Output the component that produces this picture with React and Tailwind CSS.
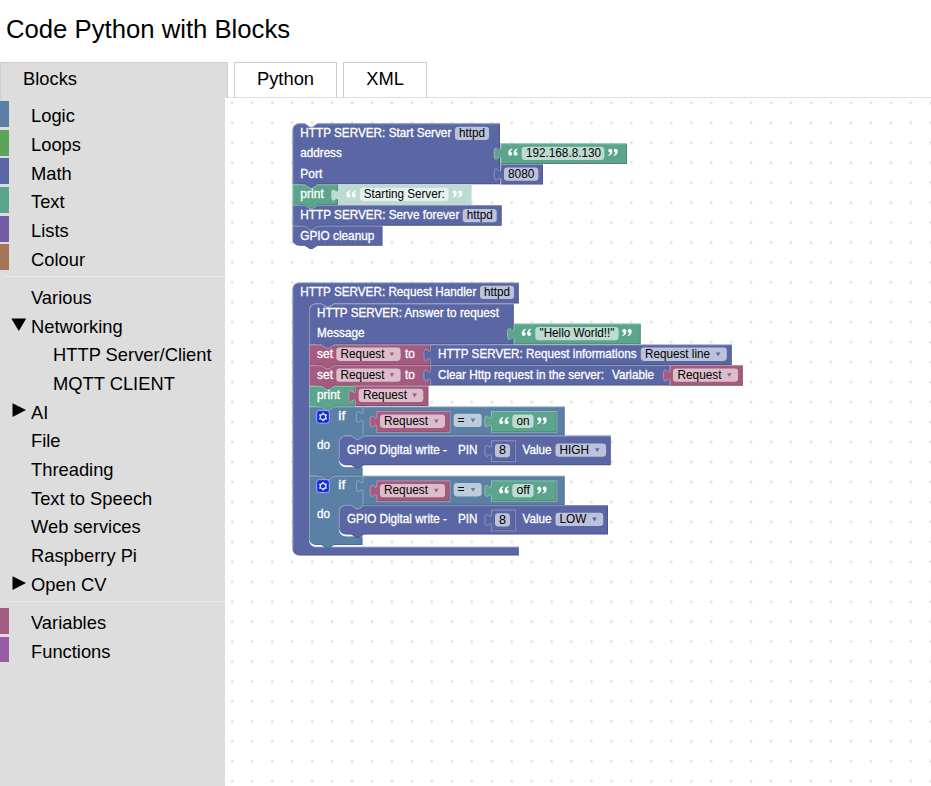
import React from "react";

const MATH = "#5b67a5";
const TEXT = "#5ba58c";
const LOGIC = "#5b80a5";
const VARS = "#a55b80";

/* ---------- toolbox ---------- */

function Row({ label, color = "transparent", icon, nested }) {
  return (
    <div
      className="flex h-[25.83px] mb-[2.87px] items-center border-l-[9px] whitespace-nowrap"
      style={{ borderLeftColor: color }}
    >
      <span className={nested ? "w-[44px] shrink-0" : "w-[22px] shrink-0"}>
        {icon === "down" && (
          <svg className="block ml-[2px] mt-[1px]" width="16" height="14" viewBox="0 0 16 14">
            <path d="M0.3 0.6H15.2L7.8 12.9Z" fill="#000" />
          </svg>
        )}
        {icon === "right" && (
          <svg className="block ml-[3px] mt-[1px]" width="15" height="15" viewBox="0 0 15 15">
            <path d="M0.5 0.2V14.1L14 7.1Z" fill="#000" />
          </svg>
        )}
      </span>
      <span className="relative top-[2.4px]">{label}</span>
    </div>
  );
}

function Separator() {
  return (
    <div className="h-[9.6px] pt-[2.8px]">
      <div className="ml-[3px] h-px bg-[#e8e8e8]" />
    </div>
  );
}

function Toolbox() {
  return (
    <div className="w-[225px] shrink-0 bg-[#ddd] pt-[3px] text-[18.33px] leading-none text-black">
      <Row label="Logic" color={LOGIC} />
      <Row label="Loops" color="#5ba55b" />
      <Row label="Math" color={MATH} />
      <Row label="Text" color={TEXT} />
      <Row label="Lists" color="#745ba5" />
      <Row label="Colour" color="#a5745b" />
      <Separator />
      <Row label="Various" />
      <Row label="Networking" icon="down" />
      <Row label="HTTP Server/Client" nested />
      <Row label="MQTT CLIENT" nested />
      <Row label="AI" icon="right" />
      <Row label="File" />
      <Row label="Threading" />
      <Row label="Text to Speech" />
      <Row label="Web services" />
      <Row label="Raspberry Pi" />
      <Row label="Open CV" icon="right" />
      <Separator />
      <Row label="Variables" color={VARS} />
      <Row label="Functions" color="#995ba5" />
    </div>
  );
}

/* ---------- blocks ---------- */

const NOTCH_R = "l5 3.4h2.5l5 -3.4";
const NOTCH_L = "l-5 3.4h-2.5l-5 -3.4";
const TAB_UP = "c0 -8.3 -6.7 6.7 -6.7 -6.25s6.7 2.1 6.7 -6.25";
const R = 6.7;

function Edges({ light, dark }) {
  return (
    <>
      <path d={dark} fill="none" stroke="#000" strokeOpacity="0.16" />
      <path d={light} fill="none" stroke="#fff" strokeOpacity="0.3" />
    </>
  );
}

function Stmt({ x, y, r, b, c, roundTop, roundBottom }) {
  const top = roundTop ? `M${x} ${y + R}a${R} ${R} 0 0 1 ${R} ${-R}` : `M${x} ${y}`;
  const notch = `H${x + 12.5}${NOTCH_R}`;
  const bottom = roundBottom ? `H${x + R}a${R} ${R} 0 0 1 ${-R} ${-R}` : `H${x}`;
  const start = `M${x + 0.5} ${b - (roundBottom ? R : 0)}`;
  const hi = roundTop
    ? `${start}V${y + R}a${R - 0.5} ${R - 0.5} 0 0 1 ${R - 0.5} ${0.5 - R}`
    : `${start}V${y + 0.5}`;
  return (
    <g>
      <path d={`${top}${notch}H${r}V${b}H${x + 25}${NOTCH_L}${bottom}Z`} fill={c} />
      <Edges
        light={`${hi}H${x + 12.5}${NOTCH_R}H${r}`}
        dark={`M${r - 0.5} ${y + 1}V${b - 0.5}H${x + 25}${NOTCH_L}H${x + R}`}
      />
    </g>
  );
}

function Value({ x, y, r, b, c, flat, inline }) {
  return (
    <g>
      <path d={`M${x} ${y}H${r}V${b}H${x}V${y + 16.7}${TAB_UP}Z`} fill={c} />
      {!flat && (
        <Edges
          light={`M${x + 0.5} ${b}V${y + 16.7}${TAB_UP}V${y + 0.5}H${r}`}
          dark={`M${r - 0.5} ${y + 1}V${b - 0.5}H${x}`}
        />
      )}
      {inline && (
        <path d={`M${x} ${b + 0.3}H${r + 0.3}V${y}`} fill="none" stroke="#fff" strokeOpacity="0.3" />
      )}
    </g>
  );
}

function Label({ x, y, w, children, dark }) {
  return (
    <text
      x={x}
      y={y}
      textLength={w}
      lengthAdjust="spacingAndGlyphs"
      fill={dark ? "#000" : "#fff"}
      stroke={dark ? "none" : "#fff"}
      strokeWidth={dark ? 0 : 0.3}
    >
      {children}
    </text>
  );
}

function Field({ x, y, w, tx, tw, children, arrow }) {
  return (
    <g>
      <rect x={x} y={y} width={w} height="13.3" rx="3.3" fill="#fff" fillOpacity="0.6" />
      <Label x={tx} y={y + 10.3} w={tw} dark>
        {children}
      </Label>
      {arrow && <path d={`M${x + w - 11} ${y + 4.8}h4.6l-2.3 3.9z`} fill={arrow} />}
    </g>
  );
}

function Quote({ x, y, close }) {
  const mark = "M4.4 0.2C2.2 0.7 0.5 2.3 0.5 4.9C0.5 6.5 1.3 7.4 2.5 7.4C3.7 7.4 4.5 6.6 4.5 5.5C4.5 4.5 3.8 3.8 2.9 3.7C2.8 2.5 3.4 1.5 4.7 0.9Z";
  return (
    <g transform={close ? `translate(${x + 10.4} ${y + 7.8}) rotate(180)` : `translate(${x} ${y})`} fill="#fff">
      <path d={mark} />
      <path d={mark} transform="translate(5.4 0)" />
    </g>
  );
}

function Gear({ x, y }) {
  return (
    <g transform={`translate(${x} ${y})`}>
      <rect width="12.6" height="12.8" rx="2.6" fill="#1428e6" stroke="#a9bdd6" strokeWidth="0.9" />
      <circle cx="6.3" cy="6.5" r="2.75" fill="none" stroke="#e4e8ff" strokeWidth="1.3" />
      <path
        d="M6.3 2.2v1.4M6.3 9.4v1.4M2.6 4.35l1.2.7M8.8 7.95l1.2.7M2.6 8.65l1.2-.7M8.8 5.05l1.2-.7"
        stroke="#e4e8ff"
        strokeWidth="1.5"
      />
    </g>
  );
}

function IfBlock({ y, op, w, right, fieldW, optW, option }) {
  const x = 309;
  const ix = 338.9;
  const arm = 362.5;
  const t = y + 29.2;
  const ib = y + 60.5;
  const b = y + 69.3;
  const last = op === "off";
  const foot = last ? `H${x + R}a${R} ${R} 0 0 1 ${-R} ${-R}` : `H${x}`;
  return (
    <g>
      <path
        d={`M${x} ${y}H${x + 12.5}${NOTCH_R}H${arm + 2}V${t}H${ix + 25}${NOTCH_L}H${ix + R}a${R} ${R} 0 0 0 ${-R} ${R}V${ib - R}a${R} ${R} 0 0 0 ${R} ${R}H${arm}V${b}H${x + 25}${NOTCH_L}${foot}Z`}
        fill={LOGIC}
      />
      <Edges
        light={`M${x + 0.5} ${b - (last ? R : 0)}V${y + 0.5}H${x + 12.5}${NOTCH_R}H${arm}M${ix + 2} ${ib - 2}a${R} ${R} 0 0 0 ${R - 2} 2H${arm}`}
        dark={`M${arm - 0.5} ${ib}V${b - 0.5}H${x + 25}${NOTCH_L}H${x + R}`}
      />
      <Gear x={316.7} y={y + 4} />
      <Label x={338.3} y={y + 13.5} w={7}>if</Label>
      <Label x={317} y={y + 42.5} w={13}>do</Label>

      <Value x={362.5} y={y} r={564.7} b={t} c={LOGIC} />
      <path d={`M${ix + 12} ${t - 0.2}H${ix + 25}${NOTCH_L}Z`} fill={LOGIC} />
      <Value x={376.3} y={y + 4.7} r={449.7} b={y + 25.6} c={VARS} inline />
      <Field x={380} y={y + 8.2} w={65} tx={384} tw={44} arrow={VARS}>Request</Field>
      <Field x={453.7} y={y + 7.4} w={28} tx={457.5} tw={7} arrow={LOGIC}>=</Field>
      <Value x={491} y={y + 4.7} r={556.6} b={y + 25.6} c={TEXT} inline />
      <Quote x={498.7} y={y + 10.4} />
      <Field x={512.3} y={y + 8.2} w={21.3} tx={516.5} tw={w}>{op}</Field>
      <Quote x={536.8} y={y + 10.4} close />

      <Stmt x={ix} y={t} r={right} b={t + 29.6} c={MATH} roundTop roundBottom />
      <Label x={347} y={t + 18.4} w={100}>GPIO Digital write -</Label>
      <Label x={458} y={t + 18.4} w={19.5}>PIN</Label>
      <Value x={491} y={t + 4.7} r={515.3} b={t + 25.6} c={MATH} inline />
      <Field x={495} y={t + 8.4} w={15} tx={499} tw={7}>8</Field>
      <Label x={522.5} y={t + 18.4} w={29}>Value</Label>
      <Field x={555.5} y={t + 7.8} w={fieldW} tx={559.5} tw={optW} arrow={MATH}>{option}</Field>
    </g>
  );
}

function StartServerStack() {
  return (
    <g>
      <Stmt x={292.4} y={225.7} r={382.5} b={245.7} c={MATH} roundBottom />
      <Stmt x={292.4} y={205} r={501.7} b={225.7} c={MATH} />
      <Stmt x={292.4} y={184.3} r={338} b={205} c={TEXT} />
      <Stmt x={292.4} y={123.3} r={500} b={184.3} c={MATH} roundTop />

      <Label x={300.3} y={137} w={151}>HTTP SERVER: Start Server</Label>
      <Field x={455} y={126.7} w={34} tx={459} tw={26}>httpd</Field>
      <Label x={300.3} y={157.3} w={41.5}>address</Label>
      <Label x={300.3} y={178} w={22}>Port</Label>

      <Value x={500.4} y={143.3} r={627} b={164} c={TEXT} />
      <Quote x={507.7} y={148.3} />
      <Field x={521.7} y={146.8} w={82.6} tx={526} tw={75}>192.168.8.130</Field>
      <Quote x={607.8} y={148.3} close />
      <Value x={500.4} y={164} r={543} b={184.6} c={MATH} />
      <Field x={504} y={167.5} w={34.3} tx={508} tw={26.5}>8080</Field>

      <Label x={300.3} y={198.2} w={23.5}>print</Label>
      <Value x={338} y={184.6} r={471.6} b={205} c="#bddbd1" flat />
      <Quote x={346} y={190} />
      <Field x={360} y={187.8} w={88.6} tx={363.8} tw={81}>Starting Server:</Field>
      <Quote x={452.3} y={190} close />

      <Label x={300.3} y={219.3} w={159}>HTTP SERVER: Serve forever</Label>
      <Field x={462.7} y={208.9} w={34} tx={466.7} tw={26}>httpd</Field>
      <Label x={300.3} y={240} w={74}>GPIO cleanup</Label>
    </g>
  );
}

function RequestHandlerStack() {
  const x = 309;
  return (
    <g>
      <path
        d={`M292.4 ${282.4 + R}a${R} ${R} 0 0 1 ${R} ${-R}H518.8V303.4H${x + 25}${NOTCH_L}H${x + R}a${R} ${R} 0 0 0 ${-R} ${R}V${546.8 - R}a${R} ${R} 0 0 0 ${R} ${R}H518.8V555.5H${292.4 + R}a${R} ${R} 0 0 1 ${-R} ${-R}Z`}
        fill={MATH}
      />
      <Edges
        light={`M292.9 549V289.1a6.2 6.2 0 0 1 6.2 -6.2H518.8M311 545a6.7 6.7 0 0 0 4.7 2.2H518.8`}
        dark="M518.3 283V303H513M518.3 547V555H299"
      />
      <Label x={300.3} y={296.2} w={176}>HTTP SERVER: Request Handler</Label>
      <Field x={480} y={285.8} w={34} tx={484} tw={26}>httpd</Field>

      <IfBlock y={475.7} op="off" w={13.5} right={608} fieldW={47.7} optW={27} option="LOW" />
      <IfBlock y={406.4} op="on" w={13} right={610.8} fieldW={50.5} optW={29.5} option="HIGH" />
      <Stmt x={x} y={385.8} r={355} b={406.4} c={TEXT} />
      <Stmt x={x} y={365.1} r={430} b={385.8} c={VARS} />
      <Stmt x={x} y={344.4} r={430} b={365.1} c={VARS} />
      <Stmt x={x} y={303.5} r={513.8} b={344.4} c={MATH} roundTop />

      <Label x={317} y={317.2} w={182}>HTTP SERVER: Answer to request</Label>
      <Label x={317} y={337.3} w={47.5}>Message</Label>
      <Value x={513.8} y={323.5} r={640.8} b={344.3} c={TEXT} />
      <Quote x={521.2} y={328.6} />
      <Field x={535.3} y={326.9} w={83.3} tx={539.5} tw={75}>"Hello World!!"</Field>
      <Quote x={621.8} y={328.6} close />

      <Label x={317} y={358} w={16}>set</Label>
      <Field x={336.3} y={347.6} w={64.3} tx={340.5} tw={44} arrow={VARS}>Request</Field>
      <Label x={405} y={358} w={10}>to</Label>
      <Value x={430} y={344.4} r={731.8} b={365} c={MATH} />
      <Label x={438} y={358} w={198.5}>HTTP SERVER: Request informations</Label>
      <Field x={640.8} y={347.6} w={86} tx={645} tw={65} arrow={MATH}>Request line</Field>

      <Label x={317} y={378.8} w={16}>set</Label>
      <Field x={336.3} y={368.4} w={64.3} tx={340.5} tw={44} arrow={VARS}>Request</Field>
      <Label x={405} y={378.8} w={10}>to</Label>
      <Value x={430} y={365} r={669.7} b={385.6} c={MATH} />
      <Label x={438} y={378.8} w={166}>Clear Http request in the server:</Label>
      <Label x={612} y={378.8} w={42}>Variable</Label>
      <Value x={669.7} y={365} r={742.8} b={385.7} c={VARS} />
      <Field x={673} y={368.4} w={65} tx={677.5} tw={44} arrow={VARS}>Request</Field>

      <Label x={317} y={399.2} w={23}>print</Label>
      <Value x={355} y={385.7} r={428.4} b={406} c={VARS} />
      <Field x={358.7} y={388.7} w={64.6} tx={363} tw={44} arrow={VARS}>Request</Field>
    </g>
  );
}

function Workspace() {
  return (
    <svg
      className="block h-[688px] w-[706px] font-['Liberation_Sans',Arial,sans-serif] text-[12.22px]"
      viewBox="225 98 706 688"
    >
      <defs>
        <pattern id="grid" x="222.3" y="92.8" width="19.955" height="19.955" patternUnits="userSpaceOnUse">
          <path d="M8.6 10H11.4M10 8.6V11.4" stroke="#ccc" strokeWidth="1" strokeOpacity="0.8" />
        </pattern>
      </defs>
      <rect x="225" y="98" width="706" height="688" fill="url(#grid)" />
      <StartServerStack />
      <RequestHandlerStack />
    </svg>
  );
}

export default function App() {
  return (
    <div className="flex h-[786px] w-[931px] flex-col overflow-hidden bg-white font-['Liberation_Sans',Arial,sans-serif] text-black">
      <h1 className="h-[62px] shrink-0 pl-[6px] pt-[14px] text-[25.7px] leading-[30px]">Code Python with Blocks</h1>
      <div className="flex h-9 shrink-0 text-[18.33px] leading-[31px]">
        <div className="w-[228px] border border-b-0 border-[#ccc] bg-[#ddd] pl-[22px]">Blocks</div>
        <div className="w-[6px] border-b border-[#ddd]" />
        <div className="w-[103px] border border-[#ccc] border-b-[#ddd] text-center">Python</div>
        <div className="w-[6px] border-b border-[#ddd]" />
        <div className="w-[84px] border border-[#ccc] border-b-[#ddd] text-center">XML</div>
        <div className="grow border-b border-[#ddd]" />
      </div>
      <div className="flex min-h-0 grow">
        <Toolbox />
        <Workspace />
      </div>
    </div>
  );
}
